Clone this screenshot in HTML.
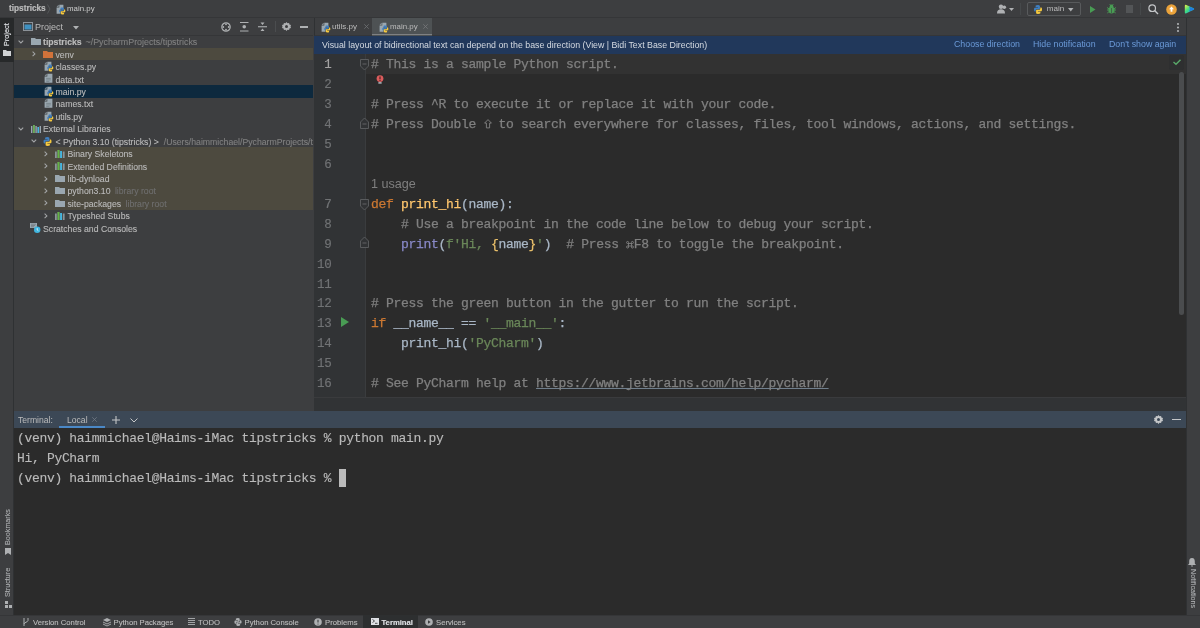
<!DOCTYPE html>
<html><head><meta charset="utf-8">
<style>
*{margin:0;padding:0;box-sizing:border-box}
html,body{width:1200px;height:628px;overflow:hidden;background:#3d3e40;will-change:transform;font-family:"Liberation Sans",sans-serif;color:#bbbbbb}
.a{position:absolute}
.t{position:absolute;white-space:pre;font-size:8.7px;line-height:12px;color:#bbbbbb}
.g{color:#808080}
svg{position:absolute;overflow:visible}
#top{left:0;top:0;width:1200px;height:18px;background:#3d3e40;border-bottom:1px solid #353638}
#lstrip{left:0;top:18px;width:14px;height:597px;background:#3d3e40;border-right:1px solid #2f3133}
#projtab{left:0;top:18px;width:13.5px;height:43.5px;background:#27292a}
#proj{left:14px;top:18px;width:300px;height:393px;background:#3d3e40}
#projhdr{left:14px;top:18px;width:299px;height:17.5px;border-bottom:1px solid #353638}
#editor{left:314px;top:18px;width:872px;height:380px;background:#2b2b2b}
#tabs{left:314px;top:18px;width:872px;height:17.5px;background:#3d3e40;border-bottom:1px solid #353638;border-left:1px solid #2f3133}
#seltab{left:372px;top:18px;width:60px;height:17.5px;background:#4e5254}
#seltabline{left:372px;top:33.5px;width:60px;height:1.8px;background:#7f8183}
#banner{left:314px;top:35.5px;width:872px;height:18px;background:#21385b}
#gutter{left:314px;top:53.5px;width:51.5px;height:344px;background:#313335;border-right:1px solid #3a3c3e}
#curline{left:314px;top:53.5px;width:872px;height:20.5px;background:#323232}
#crumbs{left:314px;top:397px;width:872px;height:14px;background:#313335;border-top:1.5px solid #3a3b3d}
#term{left:14px;top:411px;width:1172px;height:204px;background:#2b2b2b}
#termhdr{left:14px;top:411px;width:1172px;height:17px;background:#3c4856}
#bottom{left:0;top:614.5px;width:1200px;height:13.5px;background:#3d3e40;border-top:1px solid #353638}
#rstrip{left:1186px;top:18px;width:14px;height:597px;background:#3d3e40;border-left:1px solid #2f3133}
.code{position:absolute;left:371px;font-family:"Liberation Mono",monospace;font-size:13px;letter-spacing:-0.3px;line-height:20px;white-space:pre;color:#a9b7c6;margin-top:1.2px;-webkit-text-stroke:0.25px}
.ln{position:absolute;left:300px;width:31.5px;text-align:right;font-family:"Liberation Mono",monospace;font-size:12.5px;letter-spacing:-0.3px;line-height:20px;color:#717375;margin-top:1.2px;-webkit-text-stroke:0.15px}
.cm{color:#808080}.kw{color:#cc7832}.fn{color:#ffc66d}.st{color:#6a8759}.bi{color:#8888c6}.br{color:#e8bf6a}
.row{position:absolute;left:14px;width:299px;height:12.43px}
.tx{position:absolute;white-space:pre;font-size:8.7px;line-height:12.43px;color:#bbbbbb;margin-top:0.8px;-webkit-text-stroke:0.1px}
.term{position:absolute;left:17px;font-family:"Liberation Mono",monospace;font-size:13px;letter-spacing:-0.3px;line-height:20px;white-space:pre;color:#bbbbbb;margin-top:0.8px;-webkit-text-stroke:0.12px;letter-spacing:-0.32px}
.bt{position:absolute;top:616px;white-space:pre;font-size:7.7px;line-height:13px;color:#bbbbbb;-webkit-text-stroke:0.12px}
</style></head><body>
<div class="a" id="top"></div>
<div class="a" id="lstrip"></div>
<div class="a" id="projtab"></div>
<div class="a" id="proj"></div>
<div class="a" id="projhdr"></div>
<div class="a" id="editor"></div>
<div class="a" id="tabs"></div>
<div class="a" id="seltab"></div>
<div class="a" id="seltabline"></div>
<div class="a" id="banner"></div>
<div class="a" id="curline"></div>
<div class="a" id="gutter"></div>
<div class="a" id="crumbs"></div>
<div class="a" id="term"></div>
<div class="a" id="termhdr"></div>
<div class="a" id="bottom"></div>
<div class="a" id="rstrip"></div>
<!-- top bar -->
<div class="t" style="left:9px;top:3px;font-weight:bold;color:#bbbbbb;font-size:8.25px;-webkit-text-stroke:0.2px">tipstricks</div>
<svg style="left:47px;top:4px" width="4" height="10"><path d="M0.5 0.5 L3 5 L0.5 9.5" stroke="#5a5d5f" fill="none" stroke-width="0.8"/></svg>
<svg style="left:55.5px;top:3.5px" width="10" height="11" viewBox="0 0 10 11"><use href="#pyfile"/></svg>
<div class="t" style="left:67px;top:3px;font-size:7.9px;color:#cdcdcd">main.py</div>
<!-- right toolbar -->
<svg style="left:997px;top:4px" width="10" height="10" viewBox="0 0 10 10"><circle cx="4" cy="2.8" r="2.2" fill="#afb1b3"/><path d="M0 9.5c0-3 1.5-4.2 4-4.2s4 1.2 4 4.2z" fill="#afb1b3"/><circle cx="7.3" cy="3.3" r="1.8" fill="#afb1b3"/></svg>
<svg style="left:1008.5px;top:8px" width="5" height="3"><path d="M0 0h5L2.5 3z" fill="#afb1b3"/></svg>
<div class="a" style="left:1020px;top:3px;width:1px;height:12px;background:#46494b"></div>
<div class="a" style="left:1027px;top:2px;width:53.5px;height:13.5px;border:1px solid #585a5c;border-radius:2px"></div>
<svg style="left:1034px;top:4.5px" width="8" height="9" viewBox="0 0 8 9"><path d="M4 0C1.5 0 1.6 1 1.6 1v1.3h2.5v.4H.8S0 2.6 0 4.5s.8 1.9.8 1.9h.9V5.2s0-.9.9-.9h2.4s.9 0 .9-.8V1.3S6.1 0 4 0z" fill="#3e7fc1"/><path d="M4 9c2.5 0 2.4-1 2.4-1V6.7H3.9v-.4h3.3S8 6.4 8 4.5s-.8-1.9-.8-1.9h-.9v1.2s0 .9-.9.9H3s-.9 0-.9.8v2.2S1.9 9 4 9z" fill="#f5c93f"/></svg>
<div class="t" style="left:1046.8px;top:3px;font-size:8.1px">main</div>
<svg style="left:1068px;top:7.5px" width="5.5" height="3.5"><path d="M0 0h5.5L2.75 3.5z" fill="#afb1b3"/></svg>
<svg style="left:1090px;top:5.5px" width="6" height="7"><path d="M0 0L5.5 3.5L0 7z" fill="#499c54"/></svg>
<svg style="left:1107px;top:4px" width="9" height="10" viewBox="0 0 9 10"><ellipse cx="4.5" cy="6" rx="3" ry="3.6" fill="#499c54"/><circle cx="4.5" cy="2.2" r="1.8" fill="#499c54"/><path d="M0 3.5l2 1.3M9 3.5l-2 1.3M0 6h2M9 6H7M.3 9l2-1.5M8.7 9l-2-1.5M2.7.2l.9 1M6.3.2l-.9 1" stroke="#499c54" stroke-width=".9"/><path d="M4.5 4v5" stroke="#3d3e40" stroke-width=".6"/></svg>
<div class="a" style="left:1126px;top:5px;width:7px;height:7.5px;background:#535557"></div>
<div class="a" style="left:1140px;top:3px;width:1px;height:12px;background:#46494b"></div>
<svg style="left:1148px;top:3.5px" width="11" height="11"><circle cx="4.2" cy="4.2" r="3.3" stroke="#c4c6c8" stroke-width="1.2" fill="none"/><path d="M6.6 6.6L10 10" stroke="#c4c6c8" stroke-width="1.4"/></svg>
<svg style="left:1166px;top:3.5px" width="11" height="11"><circle cx="5.5" cy="5.5" r="5.3" fill="#eba33b"/><path d="M5.5 2.6L3 5.2h1.6v2.6h1.8V5.2H8z" fill="#fff"/></svg>
<svg style="left:1184px;top:3.5px" width="11" height="11" viewBox="0 0 11 11"><defs><linearGradient id="tbg" x1="0" y1="0" x2="1" y2="1"><stop offset="0" stop-color="#f3f045"/><stop offset=".45" stop-color="#3ddc84"/><stop offset="1" stop-color="#1aa3e8"/></linearGradient></defs><path d="M.8 2Q.8 .3 2.4 1L9.6 4.2Q10.8 5 9.6 5.8L2.4 9.2Q.8 9.9 .8 8.2z" fill="url(#tbg)"/><path d="M5 2.6L9.6 4.2Q10.8 5 9.6 5.8L5 7.6Q6.8 5 5 2.6z" fill="#1f7fe0"/></svg>

<!-- left strip -->
<div class="t" style="left:2.3px;top:46.3px;transform-origin:0 0;transform:rotate(-90deg);color:#dfe1e5;font-size:7.3px;line-height:10px;-webkit-text-stroke:0.15px">Project</div>
<svg style="left:3px;top:49.5px" width="8" height="6"><path d="M0 0h3l1 1h4v5H0z" fill="#d0d2d4"/></svg>
<div class="t" style="left:2.8px;top:545px;transform-origin:0 0;transform:rotate(-90deg);font-size:7.2px;line-height:10px;color:#aeb0b2;-webkit-text-stroke:0.1px">Bookmarks</div>
<svg style="left:5px;top:548px" width="6" height="6.5"><path d="M0 0h6v7L3 5L0 7z" fill="#aeb0b2"/></svg>
<div class="t" style="left:2.8px;top:597px;transform-origin:0 0;transform:rotate(-90deg);font-size:7.2px;line-height:10px;color:#aeb0b2;-webkit-text-stroke:0.1px">Structure</div>
<svg style="left:4.5px;top:600.5px" width="7" height="7"><path d="M0 0h3v3H0zM0 4h3v3H0zM4 4h3v3H4z" fill="#aeb0b2"/></svg>
<!-- right strip -->
<svg style="left:1188px;top:558px" width="8" height="9"><path d="M4 0C1.8 0 1.2 1.8 1.2 3.5v2L0 7h8L6.8 5.5v-2C6.8 1.8 6.2 0 4 0zM3 7.5h2c0 .8-.5 1.2-1 1.2s-1-.4-1-1.2z" fill="#aeb0b2"/></svg>
<div class="t" style="left:1197.5px;top:569px;transform-origin:0 0;transform:rotate(90deg);font-size:7.2px;line-height:10px;color:#aeb0b2;-webkit-text-stroke:0.1px">Notifications</div>
<!-- project header -->
<svg style="left:22.5px;top:22px" width="10" height="9"><rect x=".5" y=".5" width="9" height="8" fill="none" stroke="#8c9299"/><rect x="1.5" y="2.5" width="7" height="5" fill="#40a0d8" opacity=".85"/></svg>
<div class="t" style="left:35px;top:20.5px;font-size:9px">Project</div>
<svg style="left:72.5px;top:25.5px" width="6" height="4"><path d="M0 0h6L3 3.5z" fill="#afb1b3"/></svg>
<svg style="left:221px;top:21.5px" width="10" height="10"><circle cx="5" cy="5" r="4.2" stroke="#afb1b3" stroke-width="1.2" fill="none"/><circle cx="5" cy="2.3" r=".9" fill="#afb1b3"/><circle cx="5" cy="7.7" r=".9" fill="#afb1b3"/><circle cx="2.3" cy="5" r=".9" fill="#afb1b3"/><circle cx="7.7" cy="5" r=".9" fill="#afb1b3"/></svg>
<svg style="left:240px;top:22px" width="9" height="10"><path d="M0 .5h8.5M0 9h8.5" stroke="#afb1b3" stroke-width="1"/><circle cx="4.25" cy="4.75" r="1.8" fill="#afb1b3"/></svg>
<svg style="left:258px;top:22px" width="9" height="10"><path d="M0 4.75h9" stroke="#afb1b3" stroke-width="1.1"/><path d="M2.5 .5h4L4.5 3zM2.5 9h4L4.5 6.5z" fill="#afb1b3"/></svg>
<div class="a" style="left:275px;top:21px;width:1px;height:11px;background:#4b4d4f"></div>
<svg style="left:281.5px;top:22px" width="9" height="9" viewBox="0 0 9 9"><path d="M4.5 0l1 1.3 1.6-.3.3 1.6 1.6.5-.5 1.4.5 1.4-1.6.5-.3 1.6-1.6-.3-1 1.3-1-1.3-1.6.3-.3-1.6L0 5.9l.5-1.4L0 3.1l1.6-.5.3-1.6 1.6.3z" fill="#afb1b3"/><circle cx="4.5" cy="4.5" r="1.5" fill="#3d3e40"/></svg>
<div class="a" style="left:300px;top:26.2px;width:8px;height:1.5px;background:#afb1b3"></div>
<!-- tree -->
<div class="row" style="top:47.93px;background:#4d4a3f"></div>
<div class="row" style="top:85.22px;background:#0d293e"></div>
<div class="row" style="top:147.37px;height:62.15px;background:#4d4a3f"></div>
<!-- row0 tipstricks -->
<svg style="left:18px;top:39.5px" width="6" height="4"><path d="M.6 .6L2.9 2.9L5.2 .6" stroke="#a3a5a7" fill="none" stroke-width="1.05"/></svg>
<svg style="left:30.5px;top:38px" width="10" height="7"><path d="M0 0h4l1 1h5v6H0z" fill="#9aa7b0"/></svg>
<div class="tx" style="left:43px;top:35.5px;font-weight:bold;-webkit-text-stroke:0.15px">tipstricks <span style="font-weight:normal;color:#808080;margin-left:1.5px;-webkit-text-stroke:0.1px;font-size:8.9px">~/PycharmProjects/tipstricks</span></div>
<!-- row1 venv -->
<svg style="left:31.50px;top:51.10px" width="4" height="6"><path d="M.6 .6L2.9 2.9L.6 5.2" stroke="#a3a5a7" fill="none" stroke-width="1.05"/></svg>
<svg style="left:43px;top:50.5px" width="10" height="7"><path d="M0 0h4l1 1h5v6H0z" fill="#d1733a"/></svg>
<div class="tx" style="left:55.5px;top:47.93px">venv</div>
<svg width="0" height="0" style="position:absolute"><defs><g id="pylogo"><path d="M3 0C1.1 0 1.2.75 1.2.75v1h1.9v.3H.6S0 1.95 0 3.4s.6 1.4.6 1.4h.7v-.9s0-.7.7-.7h1.8s.7 0 .7-.6V1S4.6 0 3 0z" fill="#3e7fc1"/><path d="M3 6.8c1.9 0 1.8-.75 1.8-.75v-1H2.9v-.3h2.5S6 4.85 6 3.4s-.6-1.4-.6-1.4h-.7v.9s0 .7-.7.7H2.2s-.7 0-.7.6v1.6S1.4 6.8 3 6.8z" fill="#f5c93f"/></g><g id="pyfile"><path d="M3.3 .8H7.4V5.2H4.4V9.8H.6V3.6H3.3z" fill="#9aa7b0"/><path d="M.6 2.8L2.6 .8V2.8z" fill="#9aa7b0"/><use href="#pylogo" transform="translate(3.3 3.6) scale(1)"/></g><g id="txtfile"><path d="M3.3 .8H8.4V9.8H.6V3.6H3.3z" fill="#9aa7b0"/><path d="M.6 2.8L2.6 .8V2.8z" fill="#9aa7b0"/><path d="M2.2 5.4h4.6M2.2 6.9h4.6M2.2 8.4h3.2" stroke="#6d7880" stroke-width=".7"/></g></defs></svg><svg style="left:43.5px;top:61.0px" width="10" height="11" viewBox="0 0 10 11"><use href="#pyfile"/></svg><svg style="left:43.5px;top:73.0px" width="10" height="11" viewBox="0 0 10 11"><use href="#txtfile"/></svg><svg style="left:43.5px;top:86.0px" width="10" height="11" viewBox="0 0 10 11"><use href="#pyfile"/></svg><svg style="left:43.5px;top:98.0px" width="10" height="11" viewBox="0 0 10 11"><use href="#txtfile"/></svg><svg style="left:43.5px;top:110.5px" width="10" height="11" viewBox="0 0 10 11"><use href="#pyfile"/></svg>
<div class="tx" style="left:55.5px;top:60.36px">classes.py</div>
<div class="tx" style="left:55.5px;top:72.79px">data.txt</div>
<div class="tx" style="left:55.5px;top:85.22px">main.py</div>
<div class="tx" style="left:55.5px;top:97.65px">names.txt</div>
<div class="tx" style="left:55.5px;top:110.08px">utils.py</div>
<!-- External Libraries -->
<svg style="left:18.2px;top:126.6px" width="6" height="4"><path d="M.6 .6L2.9 2.9L5.2 .6" stroke="#a3a5a7" fill="none" stroke-width="1.05"/></svg>
<svg style="left:30.5px;top:124.5px" width="10" height="8"><path d="M0 1h1.4v7H0zM2.2 0h1.4v8H2.2zM4.4 1h1.4v7H4.4zM6.6 2h1.4v6H6.6zM8.6 1h1.4v7H8.6z" fill="#9aa7b0"/><path d="M2.2 0h1.4v8H2.2z" fill="#62b543"/><path d="M6.6 2h1.4v6H6.6z" fill="#40b6e0"/></svg>
<div class="tx" style="left:43px;top:122.51px">External Libraries</div>
<svg style="left:31px;top:139px" width="6" height="4"><path d="M.6 .6L2.9 2.9L5.2 .6" stroke="#a3a5a7" fill="none" stroke-width="1.05"/></svg>
<svg style="left:43px;top:136.5px" width="9" height="9" viewBox="0 0 8 9"><path d="M4 0C1.5 0 1.6 1 1.6 1v1.3h2.5v.4H.8S0 2.6 0 4.5s.8 1.9.8 1.9h.9V5.2s0-.9.9-.9h2.4s.9 0 .9-.8V1.3S6.1 0 4 0z" fill="#3e7fc1"/><path d="M4 9c2.5 0 2.4-1 2.4-1V6.7H3.9v-.4h3.3S8 6.4 8 4.5s-.8-1.9-.8-1.9h-.9v1.2s0 .9-.9.9H3s-.9 0-.9.8v2.2S1.9 9 4 9z" fill="#f5c93f"/></svg>
<div class="tx" style="left:55.5px;top:134.94px">&lt; Python 3.10 (tipstricks) &gt; <span class="g" style="margin-left:2.5px">/Users/haimmichael/PycharmProjects/t</span></div>
<svg style="left:43.70px;top:150.77px" width="4" height="6"><path d="M.6 .6L2.9 2.9L.6 5.2" stroke="#a3a5a7" fill="none" stroke-width="1.05"/></svg>
<svg style="left:55px;top:149.87px" width="10" height="8"><path d="M0 1.5h1.8v6.5H0zM2.6 0h1.8v8H2.6zM5.2 1h1.8v7H5.2zM7.8 1.5h1.8v6.5H7.8z" fill="#8a949a"/><path d="M2.6 0h1.8v8H2.6z" fill="#62b543"/><path d="M5.2 1h1.8v7H5.2z" fill="#40b6e0"/></svg>
<div class="tx" style="left:67.5px;top:147.37px">Binary Skeletons</div>
<svg style="left:43.70px;top:163.20px" width="4" height="6"><path d="M.6 .6L2.9 2.9L.6 5.2" stroke="#a3a5a7" fill="none" stroke-width="1.05"/></svg>
<svg style="left:55px;top:162.3px" width="10" height="8"><path d="M0 1.5h1.8v6.5H0zM2.6 0h1.8v8H2.6zM5.2 1h1.8v7H5.2zM7.8 1.5h1.8v6.5H7.8z" fill="#8a949a"/><path d="M2.6 0h1.8v8H2.6z" fill="#62b543"/><path d="M5.2 1h1.8v7H5.2z" fill="#40b6e0"/></svg>
<div class="tx" style="left:67.5px;top:159.80px">Extended Definitions</div>
<svg style="left:43.70px;top:175.63px" width="4" height="6"><path d="M.6 .6L2.9 2.9L.6 5.2" stroke="#a3a5a7" fill="none" stroke-width="1.05"/></svg>
<svg style="left:55px;top:174.73px" width="10" height="7"><path d="M0 0h4l1 1h5v6H0z" fill="#9aa7b0"/></svg>
<div class="tx" style="left:67.5px;top:172.23px">lib-dynload</div>
<svg style="left:43.70px;top:188.06px" width="4" height="6"><path d="M.6 .6L2.9 2.9L.6 5.2" stroke="#a3a5a7" fill="none" stroke-width="1.05"/></svg>
<svg style="left:55px;top:187.16px" width="10" height="7"><path d="M0 0h4l1 1h5v6H0z" fill="#9aa7b0"/></svg>
<div class="tx" style="left:67.5px;top:184.66px">python3.10<span class="g" style="color:#6f6f6f;margin-left:2px"> library root</span></div>
<svg style="left:43.70px;top:200.49px" width="4" height="6"><path d="M.6 .6L2.9 2.9L.6 5.2" stroke="#a3a5a7" fill="none" stroke-width="1.05"/></svg>
<svg style="left:55px;top:199.59px" width="10" height="7"><path d="M0 0h4l1 1h5v6H0z" fill="#9aa7b0"/></svg>
<div class="tx" style="left:67.5px;top:197.09px">site-packages<span class="g" style="color:#6f6f6f;margin-left:2px"> library root</span></div>
<svg style="left:43.70px;top:212.92px" width="4" height="6"><path d="M.6 .6L2.9 2.9L.6 5.2" stroke="#a3a5a7" fill="none" stroke-width="1.05"/></svg>
<svg style="left:55px;top:212.02px" width="10" height="8"><path d="M0 1.5h1.8v6.5H0zM2.6 0h1.8v8H2.6zM5.2 1h1.8v7H5.2zM7.8 1.5h1.8v6.5H7.8z" fill="#8a949a"/><path d="M2.6 0h1.8v8H2.6z" fill="#62b543"/><path d="M5.2 1h1.8v7H5.2z" fill="#40b6e0"/></svg>
<div class="tx" style="left:67.5px;top:209.52px">Typeshed Stubs</div>
<svg style="left:30px;top:223.45px" width="11" height="10" viewBox="0 0 11 10"><path d="M0 0h7v5H0z" fill="#9aa7b0"/><path d="M1 1.2h5M1 2.5h4M1 3.7h3" stroke="#5b6066" stroke-width=".5"/><circle cx="7.2" cy="6.8" r="3.2" fill="#40b6e0"/><path d="M7.2 5v2l1.2.8" stroke="#fff" stroke-width=".7" fill="none"/></svg>
<div class="tx" style="left:43px;top:221.95px">Scratches and Consoles</div>
<!-- editor tabs -->
<svg style="left:320.5px;top:21.5px" width="10" height="11" viewBox="0 0 10 11"><use href="#pyfile"/></svg>
<div class="t" style="left:332px;top:21px;font-size:8.05px">utils.py</div>
<svg style="left:363.5px;top:24px" width="5" height="5"><path d="M.3 .3L4.7 4.7M4.7 .3L.3 4.7" stroke="#6f7173" stroke-width=".8"/></svg>
<svg style="left:378.5px;top:21.5px" width="10" height="11" viewBox="0 0 10 11"><use href="#pyfile"/></svg>
<div class="t" style="left:390px;top:21px;font-size:7.9px">main.py</div>
<svg style="left:422.5px;top:24px" width="5" height="5"><path d="M.3 .3L4.7 4.7M4.7 .3L.3 4.7" stroke="#77797b" stroke-width=".8"/></svg>
<svg style="left:1176.5px;top:23px" width="2" height="9"><circle cx="1" cy="1" r=".9" fill="#c4c6c8"/><circle cx="1" cy="4.5" r=".9" fill="#c4c6c8"/><circle cx="1" cy="8" r=".9" fill="#c4c6c8"/></svg>
<!-- banner -->
<div class="t" style="left:322px;top:38.5px;font-size:8.8px;color:#d6dbe2">Visual layout of bidirectional text can depend on the base direction (View | Bidi Text Base Direction)</div>
<div class="t" style="left:954px;top:38px;font-size:8.8px;color:#6b9ad8">Choose direction</div>
<div class="t" style="left:1033px;top:38px;font-size:8.8px;color:#6b9ad8">Hide notification</div>
<div class="t" style="left:1109px;top:38px;font-size:8.8px;color:#6b9ad8">Don't show again</div>
<!-- check + scrollbar -->
<div class="a" style="left:1169px;top:55px;width:15px;height:14.5px;background:#2e2f30;border-radius:2px"></div>
<svg style="left:1172.5px;top:58.6px" width="8" height="6"><path d="M.5 3L3 5.3L7.5 .7" stroke="#59a869" stroke-width="1.4" fill="none"/></svg>
<div class="a" style="left:1178.8px;top:72px;width:5px;height:242.5px;background:#4a4c4e;border-radius:2.5px"></div>
<!-- line numbers -->
<div class="ln" style="top:54.00px;color:#a4a3a3">1</div>
<div class="ln" style="top:73.94px">2</div>
<div class="ln" style="top:93.88px">3</div>
<div class="ln" style="top:113.82px">4</div>
<div class="ln" style="top:133.76px">5</div>
<div class="ln" style="top:153.70px">6</div>
<div class="ln" style="top:193.58px">7</div>
<div class="ln" style="top:213.52px">8</div>
<div class="ln" style="top:233.46px">9</div>
<div class="ln" style="top:253.40px">10</div>
<div class="ln" style="top:273.34px">11</div>
<div class="ln" style="top:293.28px">12</div>
<div class="ln" style="top:313.22px">13</div>
<div class="ln" style="top:333.16px">14</div>
<div class="ln" style="top:353.10px">15</div>
<div class="ln" style="top:373.04px">16</div>
<!-- fold markers -->
<svg style="left:360.3px;top:59px" width="9" height="12"><path d="M.5 .5h8v6.5L4.5 11L.5 7z" fill="#313335" stroke="#5e6062" stroke-width=".9"/><path d="M2.5 5h4" stroke="#6e7072" stroke-width=".8"/></svg>
<svg style="left:360.3px;top:116.5px" width="9" height="12"><path d="M.5 11.5h8V5L4.5 1L.5 5z" fill="#313335" stroke="#5e6062" stroke-width=".9"/><path d="M2.5 7h4" stroke="#6e7072" stroke-width=".8"/></svg>
<svg style="left:360.3px;top:198.58px" width="9" height="12"><path d="M.5 .5h8v6.5L4.5 11L.5 7z" fill="#313335" stroke="#5e6062" stroke-width=".9"/><path d="M2.5 5h4" stroke="#6e7072" stroke-width=".8"/></svg>
<svg style="left:360.3px;top:235.96px" width="9" height="12"><path d="M.5 11.5h8V5L4.5 1L.5 5z" fill="#313335" stroke="#5e6062" stroke-width=".9"/><path d="M2.5 7h4" stroke="#6e7072" stroke-width=".8"/></svg>
<!-- bulb -->
<svg style="left:375.5px;top:74.8px" width="8" height="10"><circle cx="4" cy="3.6" r="3.4" fill="#db5c5c"/><path d="M4 1.5v2.8" stroke="#3a1f1f" stroke-width="1.1"/><circle cx="4" cy="5.4" r=".55" fill="#3a1f1f"/><rect x="2.3" y="7" width="3.4" height="1.8" rx=".6" fill="#a0a6ac"/></svg>
<!-- run gutter icon -->
<svg style="left:340.5px;top:317.22px" width="8" height="10"><path d="M0 0L8 5L0 10z" fill="#499c54"/></svg>
<!-- inlay -->
<div class="t" style="left:371px;top:177.6px;font-size:12.6px;color:#7f7f7f">1 usage</div>
<!-- code -->
<svg style="left:626.2px;top:240.8px" width="8" height="7.5" viewBox="0 0 8 7.5"><rect x="2.6" y="2.5" width="2.8" height="2.5" fill="none" stroke="#858585" stroke-width=".85"/><circle cx="1.6" cy="1.5" r="1.05" fill="none" stroke="#858585" stroke-width=".85"/><circle cx="6.4" cy="1.5" r="1.05" fill="none" stroke="#858585" stroke-width=".85"/><circle cx="1.6" cy="6" r="1.05" fill="none" stroke="#858585" stroke-width=".85"/><circle cx="6.4" cy="6" r="1.05" fill="none" stroke="#858585" stroke-width=".85"/></svg>
<svg style="left:483.9px;top:118.6px" width="8" height="10"><path d="M4 .6L7.4 4.1H5.6V8.9H2.4V4.1H.6Z" stroke="#858585" stroke-width=".9" fill="none" stroke-linejoin="round"/></svg>
<div class="code" style="top:54.00px"><span class="cm"># This is a sample Python script.</span></div>
<div class="code" style="top:93.88px"><span class="cm"># Press ^R to execute it or replace it with your code.</span></div>
<div class="code" style="top:113.82px"><span class="cm"># Press Double   to search everywhere for classes, files, tool windows, actions, and settings.</span></div>
<div class="code" style="top:193.58px"><span class="kw">def</span> <span class="fn">print_hi</span>(name):</div>
<div class="code" style="top:213.52px">    <span class="cm"># Use a breakpoint in the code line below to debug your script.</span></div>
<div class="code" style="top:233.46px">    <span class="bi">print</span>(<span class="st">f'Hi, </span><span class="br">{</span>name<span class="br">}</span><span class="st">'</span>)  <span class="cm"># Press  F8 to toggle the breakpoint.</span></div>
<div class="code" style="top:293.28px"><span class="cm"># Press the green button in the gutter to run the script.</span></div>
<div class="code" style="top:313.22px"><span class="kw">if</span> __name__ == <span class="st">'__main__'</span>:</div>
<div class="code" style="top:333.16px">    print_hi(<span class="st">'PyCharm'</span>)</div>
<div class="code" style="top:373.04px"><span class="cm"># See PyCharm help at <u style="text-underline-offset:1px;text-decoration-skip-ink:none;text-decoration-color:#71808e;text-decoration-thickness:1px">https://www.jetbrains.com/help/pycharm/</u></span></div>
<!-- terminal header -->
<div class="t" style="left:18px;top:413.5px;font-size:8.6px;color:#bbbbbb">Terminal:</div>
<div class="t" style="left:67px;top:413.5px;font-size:8.6px;color:#bbbbbb">Local</div>
<svg style="left:92px;top:417px" width="5" height="5"><path d="M.3 .3L4.7 4.7M4.7 .3L.3 4.7" stroke="#727b86" stroke-width=".8"/></svg>
<div class="a" style="left:59px;top:426px;width:46px;height:2px;background:#4a88c7"></div>
<svg style="left:112px;top:415.5px" width="8" height="8"><path d="M4 0v8M0 4h8" stroke="#c4c6c8" stroke-width="1.1"/></svg>
<svg style="left:130px;top:417.5px" width="8" height="5"><path d="M.5 .5L4 4L7.5 .5" stroke="#c4c6c8" stroke-width="1" fill="none"/></svg>
<svg style="left:1154px;top:415px" width="9" height="9" viewBox="0 0 9 9"><path d="M4.5 0l1 1.3 1.6-.3.3 1.6 1.6.5-.5 1.4.5 1.4-1.6.5-.3 1.6-1.6-.3-1 1.3-1-1.3-1.6.3-.3-1.6L0 5.9l.5-1.4L0 3.1l1.6-.5.3-1.6 1.6.3z" fill="#c4c6c8"/><circle cx="4.5" cy="4.5" r="1.5" fill="#3c4856"/></svg>
<div class="a" style="left:1172px;top:419px;width:9px;height:1.2px;background:#c4c6c8"></div>
<!-- terminal text -->
<div class="term" style="top:428px">(venv) haimmichael@Haims-iMac tipstricks % python main.py</div>
<div class="term" style="top:448px">Hi, PyCharm</div>
<div class="term" style="top:468px">(venv) haimmichael@Haims-iMac tipstricks % </div>
<div class="a" style="left:338.5px;top:469px;width:7.5px;height:18px;background:#bbbbbb"></div>
<!-- bottom bar -->
<div class="a" style="left:363px;top:615px;width:54.5px;height:13px;background:#2d2f30"></div>
<svg style="left:23px;top:618px" width="6" height="8"><path d="M1 0v8M5 0v2.5C5 4 1 4.5 1 6" stroke="#aeb0b2" stroke-width="1" fill="none"/></svg>
<div class="bt" style="left:33px">Version Control</div>
<svg style="left:103px;top:617.5px" width="8" height="8"><path d="M4 0L8 2L4 4L0 2z" fill="#aeb0b2"/><path d="M0 4l4 2 4-2M0 6l4 2 4-2" stroke="#aeb0b2" stroke-width=".9" fill="none"/></svg>
<div class="bt" style="left:113.5px">Python Packages</div>
<svg style="left:188px;top:618px" width="7" height="7"><path d="M0 .5h7M0 2.5h7M0 4.5h7M0 6.5h7" stroke="#aeb0b2" stroke-width=".9"/></svg>
<div class="bt" style="left:198px">TODO</div>
<svg style="left:234px;top:617.5px" width="8" height="8" viewBox="0 0 8 9"><path d="M4 0C1.5 0 1.6 1 1.6 1v1.3h2.5v.4H.8S0 2.6 0 4.5s.8 1.9.8 1.9h.9V5.2s0-.9.9-.9h2.4s.9 0 .9-.8V1.3S6.1 0 4 0zM4 9c2.5 0 2.4-1 2.4-1V6.7H3.9v-.4h3.3S8 6.4 8 4.5s-.8-1.9-.8-1.9h-.9v1.2s0 .9-.9.9H3s-.9 0-.9.8v2.2S1.9 9 4 9z" fill="#aeb0b2"/></svg>
<div class="bt" style="left:244.5px">Python Console</div>
<svg style="left:314px;top:617.5px" width="8" height="8"><circle cx="4" cy="4" r="3.8" fill="#aeb0b2"/><path d="M4 1.8v2.8" stroke="#3d3e40" stroke-width="1.1"/><circle cx="4" cy="6" r=".6" fill="#3d3e40"/></svg>
<div class="bt" style="left:325px">Problems</div>
<svg style="left:371px;top:618px" width="8" height="7"><rect width="8" height="7" fill="#dfe1e5"/><path d="M1.5 1.5L3.5 3L1.5 4.5M4 5.3h2.5" stroke="#2d2f30" stroke-width=".8" fill="none"/></svg>
<div class="bt" style="left:381.5px;font-weight:bold;color:#dfe1e5">Terminal</div>
<svg style="left:424.5px;top:617.5px" width="8" height="8"><circle cx="4" cy="4" r="3.8" fill="#aeb0b2"/><path d="M3 2.3L5.7 4L3 5.7z" fill="#3d3e40"/></svg>
<div class="bt" style="left:436px">Services</div>
<!--BODY-->
</body></html>
